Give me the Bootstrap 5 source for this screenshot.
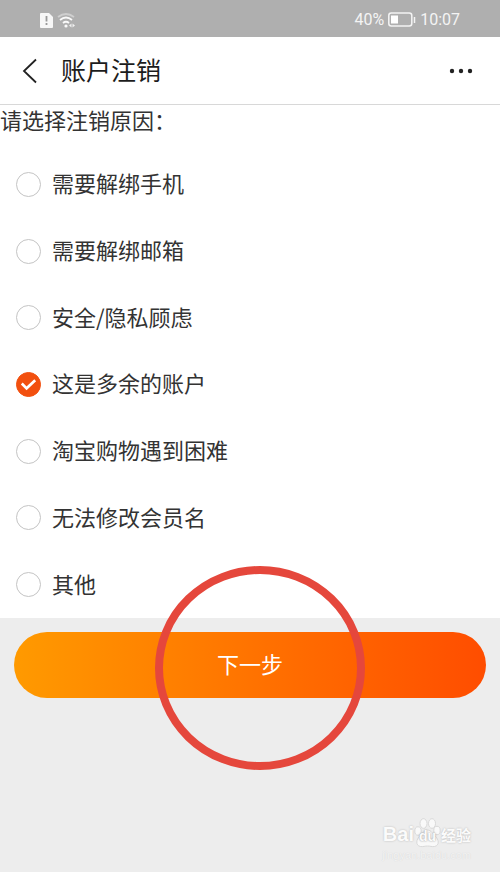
<!DOCTYPE html>
<html lang="zh-CN">
<head>
<meta charset="utf-8">
<meta name="viewport" content="width=device-width, initial-scale=1">
<title>账户注销</title>
<link href="https://cdn.jsdelivr.net/npm/bootstrap@5.3.0/dist/css/bootstrap.min.css" rel="stylesheet">
<style>
body { font-family: "Noto Sans CJK SC", sans-serif; background: #ededed; color: #333; font-size: 22px; line-height: 32px; }
.status-bar { background: #afafaf; color: #f4f4f4; height: 37px; padding: 2px 40px 0; font-family: Roboto, "Noto Sans CJK SC", sans-serif; font-size: 16px; line-height: 24px; }
.status-bar svg, .title-bar svg { display: block; }
.title-bar { height: 68px; padding: 0 20px; border-bottom: 1px solid #d8d8d8; }
.title-bar h1 { font-size: 25px; line-height: 36px; color: #1c1c1c; margin-left: 21px; padding-bottom: 4px; }
.icon-btn { line-height: 1; color: #222; }
.reason-form legend { font-size: 22px; line-height: 28px; height: 46px; }
.reason-list { display: grid; grid-auto-rows: 1fr; min-height: 467px; }
.reason { padding: 0 16px; gap: 11px; }
.reason label { padding-bottom: 4px; }
.reason .form-check-input { width: 25px; height: 25px; border: 1px solid #c4c4c4; background-color: #fff; }
.reason .form-check-input:checked { border-color: #f2500f; background-color: #f2500f; background-size: 100%;
  background-image: url("data:image/svg+xml,%3Csvg xmlns='http://www.w3.org/2000/svg' viewBox='0 0 24 24'%3E%3Cpath d='M5 11l5 5 9-8.500' fill='none' stroke='%23fff' stroke-width='2.800'/%3E%3C/svg%3E"); }
.action-area { padding: 14px; }
.next-btn { height: 66px; padding: 6px 12px 10px; font-size: 22px; line-height: 32px; color: #fff; background: linear-gradient(90deg, #ff9a00, #ff7300 50%, #ff4d00); }
.next-btn:hover { color: #fff; }
.highlight-ring { position: absolute; left: 52%; top: 50px; transform: translate(-50%, -50%); pointer-events: none; }
.brand-mark { padding: 0 29px 10px; font-family: "Liberation Sans", "Noto Sans CJK SC", sans-serif; color: #fbfbfb; text-shadow: 0 0 2px #b4b4b4; }
.brand-name { font-size: 20px; line-height: 24px; }
.brand-name .cjk { font-size: 15px; }
.brand-url { font-size: 11px; line-height: 14px; color: #f3f3f3; text-shadow: 0 0 1px #cfcfcf; }
.paw { position: relative; display: inline-block; width: 27px; text-align: center; font-size: 14px; }
.paw svg { position: absolute; left: 0; bottom: 0; }
.paw span { position: relative; text-shadow: 0 0 2px #8c8c8c; }
</style>
</head>
<body class="min-vh-100 d-flex flex-column">
<header class="bg-white">
  <div class="status-bar d-flex align-items-center justify-content-between">
    <div class="d-flex align-items-center">
      <svg width="36" height="18" viewBox="0 0 36 18" aria-hidden="true">
        <path d="M1 2h8l4 4v10a1 1 0 0 1-1 1H1a1 1 0 0 1-1-1V3a1 1 0 0 1 1-1z" fill="#f7f7f7"/>
        <path d="M6.500 5v5.500M6.500 12v2" stroke="#999" stroke-width="1.800"/>
        <g fill="none" stroke-width="1.800"><path d="M18 6q8-6 16 0" stroke="#cfcfcf"/><path d="M20 9q6-5 12 0M23 12q3-2.500 6 0" stroke="#fafafa"/></g>
        <circle cx="26" cy="15" r="1.600" fill="#fafafa"/><path d="M29 14.500l2.500-2v4zM35 14.500l-2.500-2v4z" fill="#f0f0f0"/>
      </svg>
    </div>
    <div class="d-flex align-items-center">
      <span>40%</span>
      <svg class="ms-1" width="28" height="16" viewBox="0 0 28 16" aria-hidden="true"><rect x=".8" y="1" width="23" height="13" rx="2.500" fill="none" stroke="#f4f4f4" stroke-width="1.500"/><rect x="3" y="3.500" width="7" height="8" fill="#fff"/><path d="M26.500 5v6" stroke="#f4f4f4" stroke-width="1.500"/></svg>
      <time class="ms-1">10:07</time>
    </div>
  </div>
  <nav class="title-bar d-flex align-items-center" aria-label="页面导航">
    <button type="button" class="btn icon-btn border-0 p-0" aria-label="返回"><svg width="20" height="26" viewBox="0 0 20 26"><path d="M16 1.500L4 13l12 11.500" fill="none" stroke="currentColor" stroke-width="1.800"/></svg></button>
    <h1 class="fw-normal mb-0">账户注销</h1>
    <button type="button" class="btn icon-btn border-0 p-0 ms-auto" aria-label="更多"><svg width="38" height="10" viewBox="0 0 38 10" fill="currentColor"><circle cx="10" cy="5" r="2.200"/><circle cx="19" cy="5" r="2.200"/><circle cx="28" cy="5" r="2.200"/></svg></button>
  </nav>
</header>
<main class="flex-grow-1 d-flex flex-column">
  <form class="reason-form d-flex flex-column">
    <fieldset class="bg-white">
      <legend class="mb-0">请选择注销原因：</legend>
      <div class="reason-list">
        <div class="reason d-flex align-items-center"><input class="form-check-input m-0 flex-shrink-0" type="radio" name="reason" id="r1"><label for="r1">需要解绑手机</label></div>
        <div class="reason d-flex align-items-center"><input class="form-check-input m-0 flex-shrink-0" type="radio" name="reason" id="r2"><label for="r2">需要解绑邮箱</label></div>
        <div class="reason d-flex align-items-center"><input class="form-check-input m-0 flex-shrink-0" type="radio" name="reason" id="r3"><label for="r3">安全/隐私顾虑</label></div>
        <div class="reason d-flex align-items-center"><input class="form-check-input m-0 flex-shrink-0" type="radio" name="reason" id="r4" checked><label for="r4">这是多余的账户</label></div>
        <div class="reason d-flex align-items-center"><input class="form-check-input m-0 flex-shrink-0" type="radio" name="reason" id="r5"><label for="r5">淘宝购物遇到困难</label></div>
        <div class="reason d-flex align-items-center"><input class="form-check-input m-0 flex-shrink-0" type="radio" name="reason" id="r6"><label for="r6">无法修改会员名</label></div>
        <div class="reason d-flex align-items-center"><input class="form-check-input m-0 flex-shrink-0" type="radio" name="reason" id="r7"><label for="r7">其他</label></div>
      </div>
    </fieldset>
    <div class="action-area position-relative">
      <button type="button" class="next-btn btn w-100 border-0 rounded-pill">下一步</button>
      <svg class="highlight-ring" width="212" height="206" viewBox="0 0 212 206" aria-hidden="true"><ellipse cx="106" cy="103" rx="101" ry="98" fill="none" stroke="#e5473c" stroke-width="8"/></svg>
    </div>
  </form>
</main>
<footer class="brand-mark d-flex flex-column align-items-end">
  <div class="brand-name fw-bold">Bai<span class="paw"><svg width="27" height="30" viewBox="0 0 27 30" aria-hidden="true"><g fill="#f9f9f9" stroke="#d2d2d2" stroke-width=".8"><ellipse cx="4" cy="13" rx="3.200" ry="4.200"/><ellipse cx="9.500" cy="5.500" rx="3.500" ry="4.800"/><ellipse cx="18" cy="5.500" rx="3.500" ry="4.800"/><ellipse cx="23" cy="12.500" rx="3.200" ry="4.200"/><path d="M13.500 12c4 0 5 4 8 6.500s4.500 9-1 10c-3 .4-4-.5-7-.5s-4 .9-7 .5c-5.500-1-4-7.500-1-10s4-6.500 8-6.500z"/></g></svg><span>du</span></span><span class="cjk">经验</span></div>
  <div class="brand-url">jingyan.baidu.com</div>
</footer>
<script src="https://cdn.jsdelivr.net/npm/bootstrap@5.3.0/dist/js/bootstrap.bundle.min.js"></script>
</body>
</html>
